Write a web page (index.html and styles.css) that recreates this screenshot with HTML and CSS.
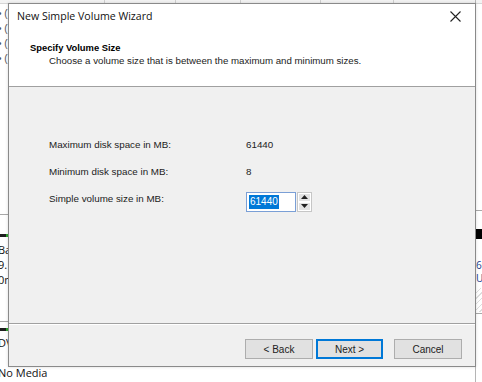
FILE: index.html
```html
<!DOCTYPE html>
<html>
<head>
<meta charset="utf-8">
<link rel="stylesheet" href="styles.css">
</head>
<body>
<div class="desktop">
  <div class="colhead">
    <span class="sep s1"></span><span class="sep s2"></span><span class="sep s3"></span><span class="sep s4"></span><span class="sep s5"></span>
  </div>
  <div class="lstrip">
    <div class="bul b1">•&nbsp;(</div>
    <div class="bul b2">•&nbsp;(</div>
    <div class="bul b3">•&nbsp;(</div>
    <div class="bul b4">•&nbsp;(</div>
    <div class="hline h1"></div>
    <div class="dark d1"></div>
    <div class="ltxt t1">Ba</div>
    <div class="ltxt t2">9.</div>
    <div class="ltxt t3">0n</div>
    <div class="hline h2"></div>
    <div class="dark d2"></div>
    <div class="ltxt t4">DV</div>
  </div>
  <div class="nomedia">No Media</div>
  <div class="rstrip">
    <div class="hline h3"></div>
    <div class="rdark"></div>
    <div class="rtxt r1">60</div>
    <div class="rtxt r2">U</div>
    <div class="hatch"></div>
    <div class="hline h4"></div>
  </div>

  <div class="dialog">
    <div class="top">
      <div class="titlebar">
        <span class="title">New Simple Volume Wizard</span>
        <svg class="close" width="11" height="11" viewBox="0 0 11 11"><path d="M0.5 0.5L10.5 10.5M10.5 0.5L0.5 10.5" stroke="#222" stroke-width="1.1" fill="none"/></svg>
      </div>
      <div class="header">
        <div class="htitle">Specify Volume Size</div>
        <div class="hsub">Choose a volume size that is between the maximum and minimum sizes.</div>
      </div>
    </div>
    <div class="body">
      <div class="row"><span class="label">Maximum disk space in MB:</span><span class="value">61440</span></div>
      <div class="row"><span class="label">Minimum disk space in MB:</span><span class="value">8</span></div>
      <div class="row"><span class="label">Simple volume size in MB:</span>
        <span class="spin">
          <span class="input"><span class="sel">61440</span></span>
          <span class="arrows">
            <span class="arr"><svg width="7" height="4" viewBox="0 0 7 4"><path d="M0 4L3.5 0L7 4Z" fill="#222"/></svg></span>
            <span class="arr"><svg width="7" height="4" viewBox="0 0 7 4"><path d="M0 0L3.5 4L7 0Z" fill="#222"/></svg></span>
          </span>
        </span>
      </div>
    </div>
    <div class="footer">
      <button class="btn">&lt; Back</button>
      <button class="btn primary">Next &gt;</button>
      <button class="btn cancel">Cancel</button>
    </div>
  </div>
</div>
</body>
</html>
```
FILE: styles.css
```css
* { box-sizing: border-box; }
html, body { margin: 0; padding: 0; }
body {
  width: 482px; height: 382px; overflow: hidden;
  background: #fff;
  font-family: "Liberation Sans", Arial, sans-serif;
  font-size: 9.8px; color: #222;
}
.desktop { position: relative; width: 482px; height: 382px; }

.colhead { position: absolute; left: 0; top: 0; width: 482px; height: 4px; background: #f3f3f3; border-bottom: 1px solid #d6d6d6; }
.sep { position: absolute; top: 0; width: 1px; height: 4px; background: #cfcfcf; }
.s1 { left: 104px; } .s2 { left: 175px; } .s3 { left: 240px; } .s4 { left: 320px; } .s5 { left: 393px; }

.lstrip { position: absolute; left: 0; top: 0; width: 8px; height: 382px; overflow: hidden; }
.bul { position: absolute; left: -2px; font-size: 10px; color: #555; line-height: 11px; white-space: nowrap; }
.b1 { top: 8px; } .b2 { top: 23px; } .b3 { top: 38px; } .b4 { top: 53px; }
.hline { position: absolute; left: 0; width: 100%; height: 1px; background: #a8a8a8; }
.h1 { top: 214px; }
.h2 { top: 321px; }
.dark { position: absolute; left: 0; width: 8px; height: 3px; background: #1e1e1e; }
.dark::after { content: ""; position: absolute; right: 0; top: 0; width: 2px; height: 3px; background: #2ca02c; }
.d1 { top: 234px; }
.d2 { top: 328px; }
.ltxt { position: absolute; left: -2px; font-family: "Open Sans", sans-serif; font-size: 11px; color: #111; line-height: 12px; }
.t1 { top: 244px; } .t2 { top: 259px; } .t3 { top: 274px; } .t4 { top: 337px; }
.nomedia { position: absolute; left: -2px; top: 366px; font-family: "Open Sans", sans-serif; font-size: 11px; color: #111; line-height: 13px; }

.rstrip { position: absolute; left: 475px; top: 0; width: 7px; height: 382px; overflow: hidden; border-left: 1px solid #b5b5b5; }
.h3 { top: 210px; }
.rdark { position: absolute; left: 0; top: 229px; width: 7px; height: 10px; background: #000; }
.rtxt { position: absolute; left: 0; font-family: "Open Sans", sans-serif; font-size: 10px; color: #1a3d8c; line-height: 11px; }
.r1 { top: 260px; } .r2 { top: 273px; }
.hatch { position: absolute; left: 0; top: 288px; width: 7px; height: 24px; background: repeating-linear-gradient(135deg, #fff 0 3px, #ddd 3px 4px); }
.h4 { top: 313px; }

.dialog {
  position: absolute; left: 8px; top: 3px; width: 468px; height: 364px;
  border: 1px solid #8a8a8a;
  background: #f0f0f0;
  display: flex; flex-direction: column;
  box-shadow: 0 0 3px rgba(0,0,0,0.15);
}
.top { background: #fff; height: 83px; border-bottom: 1px solid #a0a0a0; }
.titlebar { height: 28px; display: flex; align-items: center; justify-content: space-between; padding: 0 14px 0 8px; }
.title { font-family: "Open Sans", sans-serif; font-size: 10.6px; color: #111; position: relative; top: -2px; }
.close { position: relative; top: -2px; }
.header { padding: 9px 0 0 21px; }
.htitle { font-weight: bold; font-size: 9.4px; color: #000; line-height: 13px; }
.hsub { padding-left: 19px; font-size: 9.7px; line-height: 14px; color: #222; }

.body { flex: 1; padding: 44px 0 0 40px; border-bottom: 1px solid #a0a0a0; }
.row { display: flex; align-items: center; height: 27px; }
.label { width: 197px; }
.spin { display: flex; align-items: center; margin-top: 6px; }
.input { width: 50px; height: 20px; border: 1px solid #7a9fd6; background: #fff; padding: 2px 0 0 2px; display: flex; }
.sel { background: #0078d7; color: #fff; padding: 0 1px; height: 14px; line-height: 14px; width: 30px; font-size: 10px; }
.arrows { margin-left: 1px; display: flex; flex-direction: column; border: 1px solid #c6c6c6; width: 15px; height: 20px; background: #f0f0f0; }
.arr { flex: 1; display: flex; align-items: center; justify-content: center; background: #e3e3e3; border: 1px solid #fff; }

.footer { height: 42px; display: flex; align-items: flex-start; padding: 14px 0 0 236px; border-top: 1px solid #fff; }
.btn {
  font-family: "Liberation Sans", Arial, sans-serif; font-size: 10px; color: #222;
  width: 68px; height: 20px; background: #e1e1e1; border: 1px solid #adadad; padding: 0; margin: 0;
}
.primary { margin-left: 3px; border: 2px solid #0078d7; width: 67px; }
.cancel { margin-left: 11px; }
```
